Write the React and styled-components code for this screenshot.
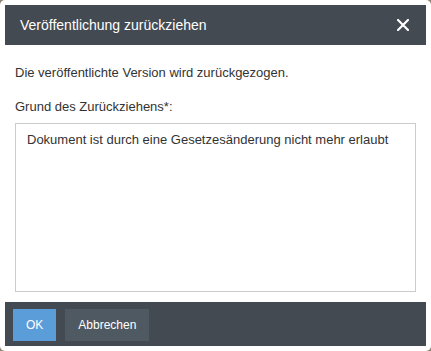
import React from 'react';
import styled, { createGlobalStyle } from 'styled-components';

const GlobalStyle = createGlobalStyle`
  html, body {
    margin: 0;
    padding: 0;
    background: #8a8570;
  }
`;

const StyledDialog = styled.div`
  display: flex;
  flex-flow: column;
  box-sizing: border-box;
  width: 431px;
  height: 351px;
  padding: 5px;
  border-radius: 5px;
  background-color: #fff;
  font-family: 'Liberation Sans', Arial, sans-serif;
  color: #333;

  .dialog-header {
    display: flex;
    align-items: center;
    justify-content: space-between;
    height: 40px;
    padding: 0 16px 0 15px;
    background-color: #434a52;
    color: #fff;
    font-size: 14px;
  }

  .dialog-close {
    display: flex;
    align-items: center;
    justify-content: center;
    width: 14px;
    height: 14px;
    padding: 0;
    border: none;
    background: none;
    cursor: pointer;
  }

  .dialog-body {
    display: flex;
    flex-flow: column;
    flex: 1;
    padding: 19px 10px 10px;
    font-size: 13px;
    line-height: 18px;
  }

  .dialog-text {
    margin: 0 0 16px;
  }

  .dialog-label {
    margin-bottom: 7px;
  }

  textarea {
    flex: 1;
    box-sizing: border-box;
    width: 100%;
    margin: 0;
    padding: 7px 11px;
    border: 1px solid #ccc;
    resize: none;
    font-family: inherit;
    font-size: 13px;
    line-height: 18px;
    color: #333;
    outline: none;
  }

  .dialog-footer {
    display: flex;
    gap: 9px;
    height: 44px;
    box-sizing: border-box;
    padding: 7px 8px 5px;
    background-color: #434a52;
  }
`;

const Button = styled.button`
  height: 32px;
  padding: 0 13px;
  border: none;
  background-color: ${({ $primary }) => ($primary ? '#5b9dd9' : '#4f5961')};
  color: #fff;
  font-family: 'Liberation Sans', Arial, sans-serif;
  font-size: 12px;
  cursor: pointer;
`;

const App = () => {
  return (
    <>
      <GlobalStyle />
      <StyledDialog>
        <div className="dialog-header">
          <span>Veröffentlichung zurückziehen</span>
          <button className="dialog-close" aria-label="Schließen">
            <svg width="12" height="12" viewBox="0 0 12 12">
              <path d="M1 1 L11 11 M11 1 L1 11" stroke="#fff" strokeWidth="2.2" strokeLinecap="square" />
            </svg>
          </button>
        </div>
        <div className="dialog-body">
          <p className="dialog-text">Die veröffentlichte Version wird zurückgezogen.</p>
          <div className="dialog-label">Grund des Zurückziehens*:</div>
          <textarea defaultValue="Dokument ist durch eine Gesetzesänderung nicht mehr erlaubt" />
        </div>
        <div className="dialog-footer">
          <Button $primary>OK</Button>
          <Button>Abbrechen</Button>
        </div>
      </StyledDialog>
    </>
  );
};

export default App;
